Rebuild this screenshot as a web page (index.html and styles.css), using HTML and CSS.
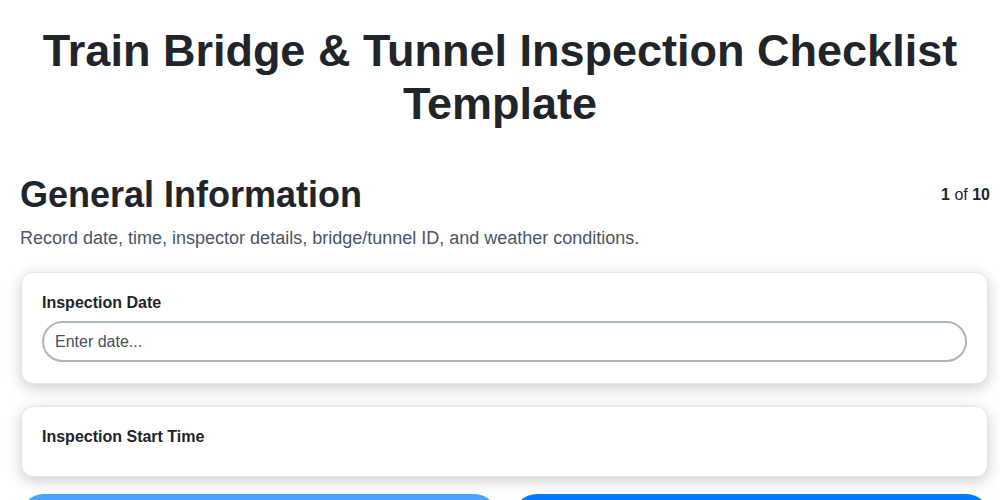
FILE: index.html
```html
<!DOCTYPE html>
<html>
	<head>
		<title>Train Bridge &amp; Tunnel Inspection Checklist Template</title>
		<link rel="stylesheet" href="styles.css">
	</head>
	<body>
		<div class="container">
			<h1 class="pageTitle">Train Bridge &amp; Tunnel Inspection Checklist Template</h1>

			<div class="sectionHead">
				<h2 class="sectionTitle">General Information</h2>
				<div class="stepCount"><b>1</b> of <b>10</b></div>
			</div>
			<p class="sectionDesc">Record date, time, inspector details, bridge/tunnel ID, and weather conditions.</p>

			<div class="card">
				<label class="fieldLabel" for="inspDate">Inspection Date</label>
				<input id="inspDate" class="fieldInput" type="text" placeholder="Enter date...">
			</div>

			<div class="card">
				<label class="fieldLabel">Inspection Start Time</label>
			</div>

			<div class="navRow">
				<button class="navBtn prev">Previous</button>
				<button class="navBtn next">Next</button>
			</div>
		</div>
	</body>
</html>
```

FILE: styles.css
```css
   body {
		margin: 0;
		background-color: #ffffff;
		font-family: "Liberation Sans", Arial, sans-serif;
		color: #212529;
   }

   .container {
		padding: 0 10px 0 20px;
   }

   .pageTitle {
		margin: 24px 10px 0 0;
		font-size: 45px;
		line-height: 53px;
		font-weight: 700;
		text-align: center;
		color: #212529;
   }

   .sectionHead {
		display: flex;
		justify-content: space-between;
		align-items: center;
		margin-top: 43px;
   }

   .sectionTitle {
		margin: 0;
		font-size: 36px;
		line-height: 44px;
		font-weight: 700;
   }

   .stepCount {
		font-size: 16px;
		color: #212529;
   }

   .sectionDesc {
		margin: 9px 0 0 0;
		font-size: 18px;
		line-height: 24px;
		color: #4a5568;
   }

   .card {
		margin: 22px 2px 0 1px;
		padding: 20px 20px 21px 20px;
		background-color: #ffffff;
		border: 1px solid #e4e4ea;
		border-radius: 12px;
		box-shadow: 0 4px 15px rgba(0, 0, 0, 0.2);
   }

   .fieldLabel {
		display: block;
		margin-bottom: 8px;
		font-size: 16px;
		line-height: 20px;
		font-weight: 700;
		color: #212529;
   }

   .fieldInput {
		display: block;
		box-sizing: border-box;
		width: 100%;
		height: 41px;
		margin: 1px 0 0 0;
		padding: 0 11px;
		border: 2px solid #adb5bd;
		border-radius: 21px;
		font-family: "Liberation Sans", Arial, sans-serif;
		font-size: 16px;
		color: #212529;
		outline: none;
   }

   .fieldInput::placeholder {
		color: #495057;
   }

   .navRow {
		display: flex;
		gap: 15px;
		margin-top: 17px;
   }

   .navBtn {
		flex: 1;
		height: 48px;
		border: none;
		border-radius: 24px;
		color: #ffffff;
		font-family: "Liberation Sans", Arial, sans-serif;
		font-size: 16px;
		font-weight: 700;
		background-color: #007bff;
		cursor: pointer;
   }

   .navBtn.prev {
		opacity: 0.7;
   }
```
